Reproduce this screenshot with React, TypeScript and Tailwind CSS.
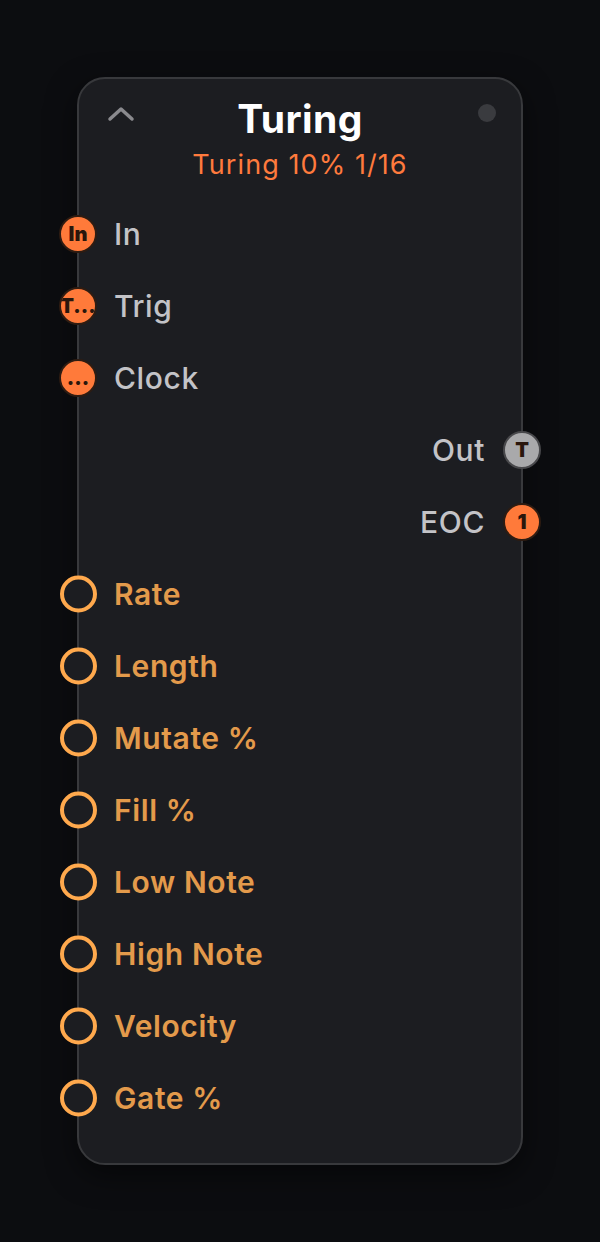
import React from "react";

const inputs = [
  { label: "In", badge: "In" },
  { label: "Trig", badge: "T..." },
  { label: "Clock", badge: "..." },
];

const outputs = [
  { label: "Out", badge: "T", tone: "gray" },
  { label: "EOC", badge: "1", tone: "orange" },
];

const params = ["Rate", "Length", "Mutate %", "Fill %", "Low Note", "High Note", "Velocity", "Gate %"];

function Badge({ text, tone }: { text: string; tone: "orange" | "gray" }) {
  const color =
    tone === "orange"
      ? "bg-[#ff7a3a] border-[#2e1c12]"
      : "bg-[#a9a9ab] border-[#48484b]";
  return (
    <div
      className={`absolute top-1/2 -translate-y-1/2 w-[38px] h-[38px] rounded-full border-2 flex items-center justify-center overflow-hidden ${color}`}
    >
      <span className="text-[20px] font-black text-[#2a160c] leading-none whitespace-nowrap">
        {text}
      </span>
    </div>
  );
}

export default function App() {
  return (
    <div
      className="min-h-screen bg-[#0c0d10] pt-[77px] pl-[77px]"
      style={{ fontFamily: "Inter, 'Noto Sans', sans-serif" }}
    >
      <div className="w-[446px] h-[1088px] rounded-[28px] border-2 border-[#38393c] bg-[#1c1d21] shadow-[0_10px_30px_rgba(0,0,0,0.5)] relative">
        {/* header */}
        <div className="relative pt-[17px] flex flex-col items-center">
          <svg
            className="absolute left-[28px] top-[27px]"
            width="28"
            height="16"
            viewBox="0 0 28 16"
            fill="none"
          >
            <path d="M3 13 L14 3 L25 13" stroke="#8a8a8e" strokeWidth="3.5" strokeLinecap="round" strokeLinejoin="round" />
          </svg>
          <div className="absolute right-[25px] top-[25px] w-[18px] h-[18px] rounded-full bg-[#3a3b3f]" />
          <div className="text-[39px] leading-[46px] font-bold text-white tracking-[0.01em]">Turing</div>
          <div className="mt-[6px] text-[27px] leading-[34px] text-[#ff7a3d] tracking-[0.04em]">Turing 10% 1/16</div>
        </div>

        {/* ports */}
        <div className="mt-[16px] flex flex-col">
          {inputs.map((p) => (
            <div key={p.label} className="relative h-[72px] flex items-center pl-[35px]">
              <div className="absolute left-[-20px] top-0 h-full">
                <Badge text={p.badge} tone="orange" />
              </div>
              <span className="text-[30px] font-medium text-[#c3c3c7] tracking-[0.02em]">{p.label}</span>
            </div>
          ))}
          {outputs.map((p) => (
            <div key={p.label} className="relative h-[72px] flex items-center justify-end pr-[36px]">
              <div className="absolute right-[18px] top-0 h-full">
                <Badge text={p.badge} tone={p.tone as "orange" | "gray"} />
              </div>
              <span className="text-[30px] font-medium text-[#c3c3c7] tracking-[0.02em]">{p.label}</span>
            </div>
          ))}
          {params.map((p) => (
            <div key={p} className="relative h-[72px] flex items-center pl-[35px]">
              <div className="absolute left-[-19px] top-1/2 -translate-y-1/2 w-[37px] h-[37px] rounded-full border-4 border-[#ffa94d] bg-[#1c1d21]" />
              <span className="text-[30px] font-semibold text-[#e39a4b] tracking-[0.02em]">{p}</span>
            </div>
          ))}
        </div>
      </div>
    </div>
  );
}
